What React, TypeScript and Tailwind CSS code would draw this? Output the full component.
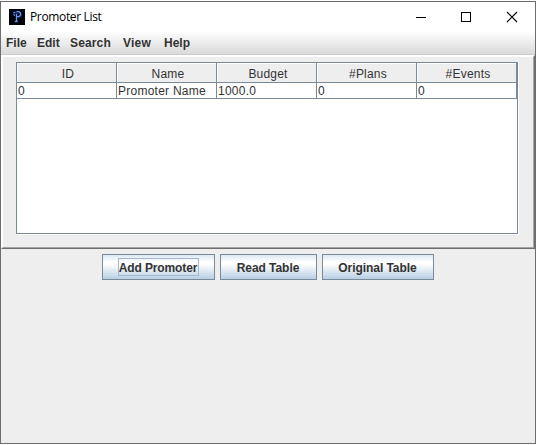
const columns = ['ID', 'Name', 'Budget', '#Plans', '#Events'];
const row = ['0', 'Promoter Name', '1000.0', '0', '0'];

const menus = [
  { label: 'File', box: 'w-[31px]' },
  { label: 'Edit', box: 'w-[33px]' },
  { label: 'Search', box: 'w-[53px] tracking-[0.15px]' },
  { label: 'View', box: 'w-[41px] tracking-[0.2px]' },
  { label: 'Help', box: 'w-[36px]' },
];

const buttons = [
  { label: 'Add Promoter', size: 'w-[113px]', focused: true, spacing: 'tracking-[-0.12px] pr-px' },
  { label: 'Read Table', size: 'w-[97px]', focused: false, spacing: 'tracking-[-0.05px] pr-px' },
  { label: 'Original Table', size: 'w-[112px]', focused: false, spacing: 'tracking-[-0.06px] pr-px' },
];

function AppIcon() {
  return (
    <svg width="16" height="16" viewBox="0 0 16 16" className="block">
      <rect width="16" height="16" fill="#000208" />
      <path d="M5 5.500V3.500h5.500L12 5v1.500L10.500 8H8M7.500 4v8.500M5.500 12.500h3.500" fill="none" stroke="#17346f" strokeWidth="1.800" />
      <path d="M4.500 3.500H6M7.500 2.500h2.500l1.500 1.500v2L10 7.500H7.500M7.500 5v7M4.500 5.500 6 6.500M6 12.500h2.500" fill="none" stroke="#6b9bf0" strokeWidth="1.100" />
    </svg>
  );
}

function TitleBar() {
  return (
    <header className="flex h-[29px] shrink-0 items-center bg-white pl-2">
      <AppIcon />
      <h1 className="ml-[5px] flex-1 whitespace-nowrap pt-px font-['Open_Sans',sans-serif] text-[12px] leading-4 tracking-[-0.35px] text-black">Promoter List</h1>
      <svg width="114" height="12" viewBox="0 0 114 12" className="mr-[9px] block" fill="none" stroke="#000" shapeRendering="crispEdges">
        <path d="M4 6.500h10" />
        <rect x="49.500" y="1.500" width="9" height="9" />
        <path d="M95 1l10 10M105 1L95 11" shapeRendering="auto" strokeWidth="1.100" />
      </svg>
    </header>
  );
}

function MenuBar() {
  return (
    <nav className="flex h-[24px] shrink-0 border-b border-[#cccccc] bg-linear-to-b from-white to-[#dadada] pl-[5px] text-[12px] font-bold leading-[24px] text-[#333]">
      {menus.map((m) => (
        <span key={m.label} className={m.box + ' whitespace-nowrap'}>{m.label}</span>
      ))}
    </nav>
  );
}

function PromoterTable() {
  return (
    <div className="h-[173px] w-[503px] border-b border-r border-white">
      <div className="h-full w-full border border-[#7a8a99] bg-white">
        <div className="flex h-5 border-r border-[#7a8a99]">
          {columns.map((c) => (
            <div key={c} className="h-full w-[100px] shrink-0 border-b border-r border-[#7a8a99] bg-[#eee]">
              <div className="h-full border-l border-t border-white pl-[2px] text-center leading-[20px] tracking-[0.2px]">{c}</div>
            </div>
          ))}
        </div>
        <div className="flex h-4">
          {row.map((value, i) => (
            <div key={i} className="w-[100px] shrink-0 whitespace-nowrap border-b border-r border-[#7a8a99] pl-px leading-[17px] tracking-[0.25px]">{value}</div>
          ))}
        </div>
      </div>
    </div>
  );
}

export default function App() {
  return (
    <div className="h-[445px] w-[536px] overflow-hidden bg-white py-px font-['Liberation_Sans',Arial,sans-serif] text-[12px] text-[#333]">
      <div className="flex h-[443px] flex-col border border-[#6d6d6d] bg-[#eee]">
        <TitleBar />
        <MenuBar />
        <main className="h-[194px] shrink-0 border border-b-[#6e6e6e] border-l-white border-r-[#6e6e6e] border-t-white">
          <div className="h-full border border-b-[#a5a5a5] border-l-white border-r-[#a5a5a5] border-t-white pl-[13px] pt-[5px]">
            <PromoterTable />
          </div>
        </main>
        <div className="flex gap-[5px] pl-[101px] pt-[5px]">
          {buttons.map((b) => (
            <button
              key={b.label}
              className={b.size + ' flex h-[26px] items-center justify-center border border-[#7a8a99] bg-[linear-gradient(to_bottom,#dde8f3_0%,#ffffff_30%,#ffffff_38%,#b8cfe5_100%)] font-bold'}
            >
              <span className={(b.focused ? 'border-[#a3b8cc] ' : 'border-transparent ') + b.spacing + ' h-[18px] whitespace-nowrap border leading-[18px]'}>{b.label}</span>
            </button>
          ))}
        </div>
      </div>
    </div>
  );
}
